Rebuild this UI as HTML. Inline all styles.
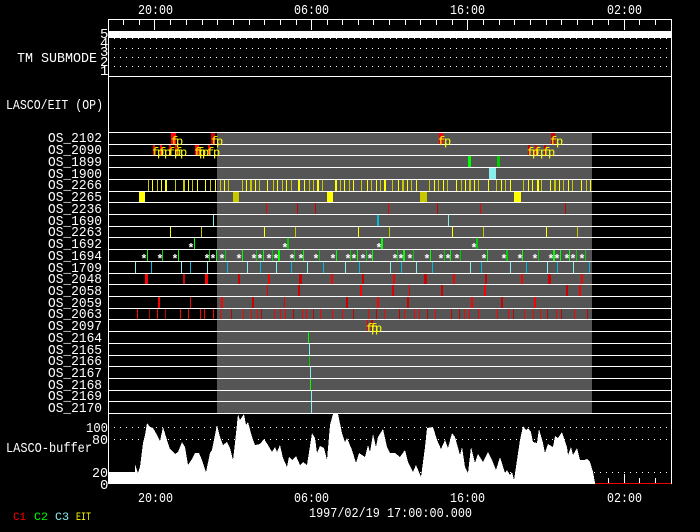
<!DOCTYPE html>
<html><head><meta charset="utf-8"><title>LASCO</title>
<style>
html,body{margin:0;padding:0;background:#000;width:700px;height:532px;overflow:hidden}
svg{display:block}
text{font-family:"Liberation Mono",monospace;fill:#fff;font-size:14px}
.s{font-size:12px;fill:#ff0}
.a{font-size:12px;font-weight:bold;text-anchor:middle}
</style></head><body>
<svg xmlns="http://www.w3.org/2000/svg" width="700" height="532" viewBox="0 0 700 532">
<rect x="217" y="132" width="375" height="281" fill="#555"/>
<g shape-rendering="crispEdges">
<!-- red bars -->
<g fill="#f00">
<rect x="171" y="132" width="5" height="12"/><rect x="211" y="132" width="4" height="12" fill="#c00"/><rect x="439" y="132" width="4" height="12"/><rect x="551" y="132" width="4" height="12" fill="#c00"/>
<rect x="153" y="144" width="2" height="11"/><rect x="160" y="144" width="2" height="11"/><rect x="169" y="144" width="2" height="11"/><rect x="175" y="144" width="2" height="11"/><rect x="195" y="144" width="4" height="11"/><rect x="208" y="144" width="2" height="11"/><rect x="528" y="144" width="2" height="11" fill="#c00"/><rect x="535" y="144" width="2" height="11"/><rect x="544" y="144" width="2" height="11" fill="#c00"/>
<rect x="145" y="273" width="3" height="11"/><rect x="183" y="273" width="2" height="11" fill="#c00"/><rect x="205" y="273" width="3" height="11"/><rect x="238" y="273" width="2" height="11" fill="#c00"/><rect x="268" y="273" width="2" height="11"/><rect x="299" y="273" width="3" height="11" fill="#c00"/><rect x="331" y="273" width="2" height="11"/><rect x="362" y="273" width="2" height="11" fill="#c00"/><rect x="393" y="273" width="2" height="11"/><rect x="424" y="273" width="3" height="11" fill="#c00"/><rect x="453" y="273" width="2" height="11"/><rect x="485" y="273" width="2" height="11" fill="#c00"/><rect x="521" y="273" width="2" height="11"/><rect x="548" y="273" width="3" height="11" fill="#c00"/><rect x="581" y="273" width="2" height="11"/>
<rect x="298" y="284" width="2" height="12" fill="#c00"/><rect x="360" y="284" width="2" height="12"/><rect x="392" y="284" width="2" height="12" fill="#d00"/><rect x="441" y="284" width="2" height="12" fill="#c00"/><rect x="484" y="284" width="2" height="12"/><rect x="566" y="284" width="2" height="12" fill="#c00"/><rect x="579" y="284" width="2" height="12"/>
<rect x="158" y="296" width="2" height="12"/><rect x="221" y="296" width="2" height="12"/><rect x="252" y="296" width="2" height="12" fill="#c00"/><rect x="346" y="296" width="2" height="12" fill="#c00"/><rect x="377" y="296" width="2" height="12"/><rect x="407" y="296" width="2" height="12" fill="#c00"/><rect x="471" y="296" width="2" height="12"/><rect x="501" y="296" width="2" height="12" fill="#c00"/><rect x="534" y="296" width="2" height="12"/>
<rect x="371" y="319" width="2" height="12" fill="#c00"/>
</g>
<path stroke="#e00" fill="none" d="M266.500 202V214M388.500 202V214M480.500 202V214M367.500 319V331M267.500 284V296M409.500 284V296M190.500 296V308M284.500 296V308"/>
<path stroke="#c00" fill="none" d="M297.500 202V214M315.500 202V214M437.500 202V214M565.500 202V214"/>
<!-- OS_2063 -->
<path stroke="#f00" fill="none" d="M137.500 308V319M157.500 308V319M180.500 308V319M188.500 308V319M200.500 308V319M204.500 308V319M213.500 308V319M220.500 308V319M243.500 308V319M251.500 308V319M257.500 308V319M274.500 308V319M280.500 308V319M285.500 308V319M302.500 308V319M306.500 308V319M320.500 308V319M332.500 308V319M342.500 308V319M368.500 308V319M384.500 308V319M404.500 308V319M414.500 308V319M419.500 308V319M435.500 308V319M464.500 308V319M469.500 308V319M478.500 308V319M497.500 308V319M508.500 308V319M524.500 308V319M533.500 308V319M540.500 308V319M556.500 308V319M574.500 308V319"/>
<path stroke="#c80000" fill="none" d="M149.500 308V319M165.500 308V319M231.500 308V319M261.500 308V319M293.500 308V319M313.500 308V319M353.500 308V319M376.500 308V319M399.500 308V319M427.500 308V319M451.500 308V319M459.500 308V319M513.500 308V319M547.500 308V319M561.500 308V319M587.500 308V319"/>
<!-- OS_2266 yellow -->
<path stroke="#ff0" fill="none" d="M152.500 179V191M161.500 179V191M165.500 179V191M166.500 179V191M188.500 179V191M197.500 179V191M205.500 179V191M215.500 179V191M224.500 179V191M246.500 179V191M255.500 179V191M267.500 179V191M277.500 179V191M286.500 179V191M298.500 179V191M299.500 179V191M304.500 179V191M317.500 179V191M318.500 179V191M335.500 179V191M336.500 179V191M344.500 179V191M353.500 179V191M367.500 179V191M376.500 179V191M384.500 179V191M385.500 179V191M398.500 179V191M407.500 179V191M416.500 179V191M434.500 179V191M443.500 179V191M456.500 179V191M465.500 179V191M474.500 179V191M488.500 179V191M501.500 179V191M510.500 179V191M528.500 179V191M532.500 179V191M537.500 179V191M538.500 179V191M550.500 179V191M559.500 179V191M568.500 179V191M581.500 179V191M590.500 179V191"/>
<path stroke="#c8c800" fill="none" d="M148.500 179V191M157.500 179V191M175.500 179V191M183.500 179V191M184.500 179V191M192.500 179V191M210.500 179V191M220.500 179V191M228.500 179V191M242.500 179V191M250.500 179V191M251.500 179V191M259.500 179V191M273.500 179V191M282.500 179V191M291.500 179V191M309.500 179V191M313.500 179V191M322.500 179V191M340.500 179V191M349.500 179V191M361.500 179V191M371.500 179V191M380.500 179V191M392.500 179V191M402.500 179V191M403.500 179V191M411.500 179V191M429.500 179V191M438.500 179V191M447.500 179V191M461.500 179V191M469.500 179V191M470.500 179V191M478.500 179V191M496.500 179V191M505.500 179V191M523.500 179V191M541.500 179V191M554.500 179V191M555.500 179V191M563.500 179V191M572.500 179V191M586.500 179V191"/>
<rect x="139" y="191" width="6" height="11" fill="#ff0"/><rect x="233" y="191" width="6" height="11" fill="#c8c800"/><rect x="327" y="191" width="6" height="11" fill="#ff0"/><rect x="420" y="191" width="7" height="11" fill="#c8c800"/><rect x="514" y="191" width="7" height="11" fill="#ff0"/>
<rect x="468" y="155" width="3" height="12" fill="#0f0"/><rect x="497" y="155" width="3" height="12" fill="#0c0"/>
<rect x="489" y="167" width="7" height="12" fill="#8ee"/>
<!-- 1690 -->
<path stroke="#8ee" fill="none" d="M213.500 214V226M448.500 214V226"/><rect x="377" y="214" width="2" height="12" fill="#0bd"/>
<!-- 2263 -->
<path stroke="#ff0" fill="none" d="M170.500 226V237M264.500 226V237M358.500 226V237M452.500 226V237M546.500 226V237"/>
<path stroke="#c8c800" fill="none" d="M201.500 226V237M295.500 226V237M389.500 226V237M483.500 226V237M577.500 226V237"/>
<!-- 1692 -->
<rect x="194" y="237" width="1" height="12" fill="#0f0"/><rect x="287" y="237" width="2" height="12" fill="#0c0"/><rect x="381" y="237" width="2" height="12" fill="#0f0"/><rect x="476" y="237" width="2" height="12" fill="#0c0"/>
<!-- 1694 -->
<path stroke="#0f0" fill="none" d="M147.500 249V261M178.500 249V261M216.500 249V261M242.500 249V261M263.500 249V261M279.500 249V261M278.500 249V261M303.500 249V261M336.500 249V261M357.500 249V261M372.500 249V261M404.500 249V261M403.500 249V261M430.500 249V261M450.500 249V261M487.500 249V261M522.500 249V261M554.500 249V261M553.500 249V261M560.500 249V261M569.500 249V261"/>
<path stroke="#0c0" fill="none" d="M162.500 249V261M209.500 249V261M225.500 249V261M256.500 249V261M272.500 249V261M294.500 249V261M319.500 249V261M350.500 249V261M366.500 249V261M397.500 249V261M413.500 249V261M444.500 249V261M460.500 249V261M507.500 249V261M506.500 249V261M538.500 249V261M576.500 249V261M585.500 249V261"/>
<!-- 1709 -->
<path stroke="#8ee" fill="none" d="M135.500 261V273M181.500 261V273M207.500 261V273M247.500 261V273M276.500 261V273M307.500 261V273M345.500 261V273M390.500 261V273M416.500 261V273M470.500 261V273M510.500 261V273M547.500 261V273M573.500 261V273"/>
<path stroke="#0bd" fill="none" d="M151.500 261V273M190.500 261V273M227.500 261V273M260.500 261V273M291.500 261V273M323.500 261V273M359.500 261V273M401.500 261V273M432.500 261V273M481.500 261V273M526.500 261V273M557.500 261V273M589.500 261V273"/>
<!-- 216x -->
<path fill="none" stroke="#0f0" d="M308.500 331V343M310.500 378V390"/><path fill="none" stroke="#0c0" d="M309.500 355V366"/><path fill="none" stroke="#8ee" d="M309.500 343V355M310.500 366V378M311.500 390V413"/>
<!-- row lines and frame -->
<path stroke="#fff" fill="none" d="M108 19.500H672M108 76.500H672M108 132.500H672M108 144.500H672M108 155.500H672M108 167.500H672M108 179.500H672M108 191.500H672M108 202.500H672M108 214.500H672M108 226.500H672M108 237.500H672M108 249.500H672M108 261.500H672M108 273.500H672M108 284.500H672M108 296.500H672M108 308.500H672M108 319.500H672M108 331.500H672M108 343.500H672M108 355.500H672M108 366.500H672M108 378.500H672M108 390.500H672M108 401.500H672M108 413.500H672M108.500 19V484M671.500 19V484"/>
<path stroke="#fff" fill="none" d="M123.500 19V25M139.500 19V25M154.500 19V30M170.500 19V25M186.500 19V25M202.500 19V25M217.500 19V25M233.500 19V25M249.500 19V25M264.500 19V25M280.500 19V25M296.500 19V25M311.500 19V30M327.500 19V25M342.500 19V25M358.500 19V25M373.500 19V25M389.500 19V25M405.500 19V25M420.500 19V25M436.500 19V25M452.500 19V25M467.500 19V30M483.500 19V25M499.500 19V25M514.500 19V25M530.500 19V25M546.500 19V25M561.500 19V25M577.500 19V25M592.500 19V25M608.500 19V25M624.500 19V30M639.500 19V25M655.500 19V25"/>
<rect x="109" y="31" width="562" height="7" fill="#fff"/>
<path stroke="#fff" stroke-dasharray="1 5" fill="none" d="M114 38.500H668M114 48.500H668M114 57.500H668M114 66.500H668M114 427.500H668M114 439.500H668M114 472.500H668"/>
<path stroke="#fff" fill="none" d="M608.500 478V483M624.500 474V483M639.500 478V483M655.500 478V483"/>
<path stroke="#e00" fill="none" d="M594 483.500H671"/>
<!-- buffer profile -->
<polygon fill="#fff" points="109,484 109,472 135,472 135,464 138,473 140,467 143,443 145,435 147,423 150,427 153,428 157,435 160,441 163,427 167,440 170,449 175,454 178,452 182,442 185,447 188,465 192,459 195,453 199,453 202,460 206,472 210,453 212,450 217,425 220,437 223,445 227,442 230,448 233,460 235,443 238,414 240,420 244,414 246,425 248,422 252,437 255,445 260,444 264,439 268,445 272,452 275,447 277,452 280,445 283,458 287,467 289,457 292,460 296,456 300,465 303,462 307,465 312,433 315,438 317,453 320,446 324,448 327,460 330,425 333,414 338,414 342,433 345,442 347,438 352,450 356,463 359,453 365,457 368,445 370,452 373,434 376,447 378,437 383,429 387,447 390,453 395,453 400,457 405,450 408,462 413,472 416,465 421,477 425,447 427,428 433,427 437,440 441,449 445,440 448,448 452,433 455,437 460,455 462,447 465,467 468,473 471,447 475,463 478,454 483,462 488,452 492,460 496,470 500,457 505,473 507,470 510,475 512,472 514,480 517,460 520,440 523,426 526,430 528,428 531,432 533,442 537,443 539,429 543,443 545,453 548,444 553,447 555,436 558,438 562,432 567,447 568,455 571,447 573,455 577,448 580,460 584,460 587,459 590,462 593,472 595,483 595,484"/>
</g>
<!-- fp labels -->
<text class="s" x="171 176" y="145">fp</text><text class="s" x="211 216" y="145">fp</text><text class="s" x="438 444" y="145">fp</text><text class="s" x="550 556" y="145">fp</text>
<text class="s" x="152 157 159 164 168 174 175 180" y="156">fpfpfpfp</text><text class="s" x="194 199 197 202 207 213" y="156">fpfpfp</text><text class="s" x="527 532 534 540 543 548" y="156">fpfpfp</text>
<text class="s" x="366 371 370 375" y="332">fpfp</text>
<!-- stars -->
<text class="a" x="191 285 379 474" y="252">****</text>
<text class="a" x="144 160 175 207 213 222 239 254 260 269 276 292 301 316 333 348 354 363 370 395 401 410 427 441 448 457 484 504 520 535 551 557 567 573 582" y="263">***********************************</text>
<!-- time axis -->
<text x="138" y="14" textLength="35" lengthAdjust="spacingAndGlyphs">20:00</text><text x="294" y="14" textLength="35" lengthAdjust="spacingAndGlyphs">06:00</text><text x="450" y="14" textLength="35" lengthAdjust="spacingAndGlyphs">16:00</text><text x="607" y="14" textLength="35" lengthAdjust="spacingAndGlyphs">02:00</text>
<text x="138" y="502" textLength="35" lengthAdjust="spacingAndGlyphs">20:00</text><text x="294" y="502" textLength="35" lengthAdjust="spacingAndGlyphs">06:00</text><text x="450" y="502" textLength="35" lengthAdjust="spacingAndGlyphs">16:00</text><text x="607" y="502" textLength="35" lengthAdjust="spacingAndGlyphs">02:00</text>
<text x="309" y="517" textLength="163" lengthAdjust="spacingAndGlyphs">1997/02/19 17:00:00.000</text>
<!-- left labels -->
<text x="100" y="38">5</text><text x="100" y="47">4</text><text x="100" y="56">3</text><text x="100" y="66">2</text><text x="100" y="75">1</text>
<text x="17" y="62" textLength="80" lengthAdjust="spacingAndGlyphs">TM SUBMODE</text>
<text x="6" y="109" textLength="97" lengthAdjust="spacingAndGlyphs">LASCO/EIT (OP)</text>
<text x="6" y="452" textLength="86" lengthAdjust="spacingAndGlyphs">LASCO-buffer</text>
<text x="86" y="432" textLength="22" lengthAdjust="spacingAndGlyphs">100</text><text x="92" y="444" textLength="16" lengthAdjust="spacingAndGlyphs">80</text><text x="92" y="477" textLength="16" lengthAdjust="spacingAndGlyphs">20</text><text x="100" y="489">0</text>
<g>
<text x="48" y="142" textLength="54" lengthAdjust="spacingAndGlyphs">OS_2102</text>
<text x="48" y="154" textLength="54" lengthAdjust="spacingAndGlyphs">OS_2090</text>
<text x="48" y="166" textLength="54" lengthAdjust="spacingAndGlyphs">OS_1899</text>
<text x="48" y="178" textLength="54" lengthAdjust="spacingAndGlyphs">OS_1900</text>
<text x="48" y="189" textLength="54" lengthAdjust="spacingAndGlyphs">OS_2266</text>
<text x="48" y="201" textLength="54" lengthAdjust="spacingAndGlyphs">OS_2265</text>
<text x="48" y="213" textLength="54" lengthAdjust="spacingAndGlyphs">OS_2236</text>
<text x="48" y="225" textLength="54" lengthAdjust="spacingAndGlyphs">OS_1690</text>
<text x="48" y="236" textLength="54" lengthAdjust="spacingAndGlyphs">OS_2263</text>
<text x="48" y="248" textLength="54" lengthAdjust="spacingAndGlyphs">OS_1692</text>
<text x="48" y="260" textLength="54" lengthAdjust="spacingAndGlyphs">OS_1694</text>
<text x="48" y="272" textLength="54" lengthAdjust="spacingAndGlyphs">OS_1709</text>
<text x="48" y="283" textLength="54" lengthAdjust="spacingAndGlyphs">OS_2048</text>
<text x="48" y="295" textLength="54" lengthAdjust="spacingAndGlyphs">OS_2058</text>
<text x="48" y="307" textLength="54" lengthAdjust="spacingAndGlyphs">OS_2059</text>
<text x="48" y="318" textLength="54" lengthAdjust="spacingAndGlyphs">OS_2063</text>
<text x="48" y="330" textLength="54" lengthAdjust="spacingAndGlyphs">OS_2097</text>
<text x="48" y="342" textLength="54" lengthAdjust="spacingAndGlyphs">OS_2164</text>
<text x="48" y="354" textLength="54" lengthAdjust="spacingAndGlyphs">OS_2165</text>
<text x="48" y="365" textLength="54" lengthAdjust="spacingAndGlyphs">OS_2166</text>
<text x="48" y="377" textLength="54" lengthAdjust="spacingAndGlyphs">OS_2167</text>
<text x="48" y="389" textLength="54" lengthAdjust="spacingAndGlyphs">OS_2168</text>
<text x="48" y="400" textLength="54" lengthAdjust="spacingAndGlyphs">OS_2169</text>
<text x="48" y="412" textLength="54" lengthAdjust="spacingAndGlyphs">OS_2170</text>
</g>
<!-- legend -->
<text x="13" y="520" style="font-size:11px;fill:#f00" textLength="13" lengthAdjust="spacingAndGlyphs">C1</text>
<text x="34" y="520" style="font-size:11px;fill:#0f0" textLength="14" lengthAdjust="spacingAndGlyphs">C2</text>
<text x="55" y="520" style="font-size:11px;fill:#8ee" textLength="14" lengthAdjust="spacingAndGlyphs">C3</text>
<text x="76" y="520" style="font-size:11px;fill:#ff0" textLength="15" lengthAdjust="spacingAndGlyphs">EIT</text>
</svg>
</body></html>
